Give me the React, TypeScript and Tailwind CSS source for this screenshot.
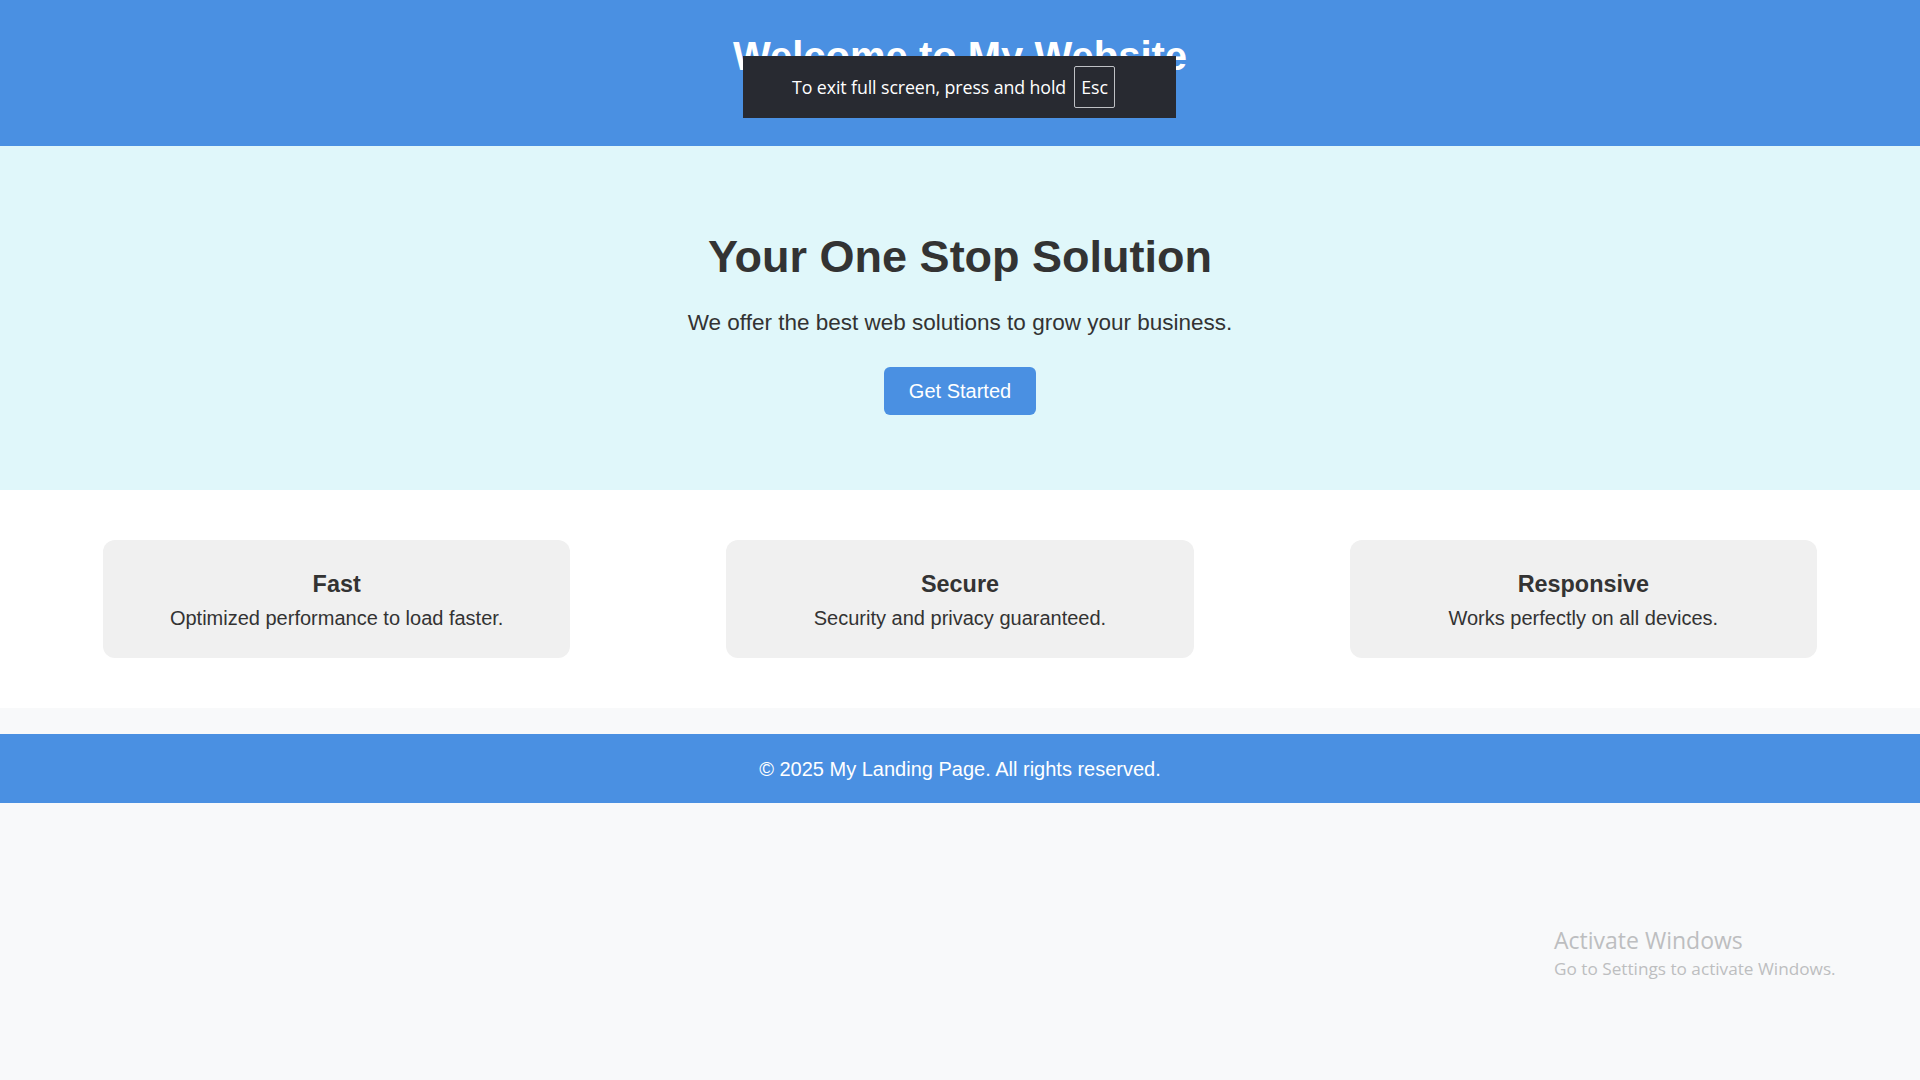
import React from 'react';

// --- Data ---
const features = [
  { title: 'Fast', text: 'Optimized performance to load faster.' },
  { title: 'Secure', text: 'Security and privacy guaranteed.' },
  { title: 'Responsive', text: 'Works perfectly on all devices.' },
];

// --- Feature card ---
const FeatureCard = ({ title, text }: { title: string; text: string }) => (
  <div className="w-1/4 bg-[#f0f0f0] rounded-[12px] pt-[31px] pb-[28px] text-center">
    <h3 className="text-[23.4px] leading-[26px] font-bold mb-[10px]">{title}</h3>
    <p className="text-[20px] leading-[23px]">{text}</p>
  </div>
);

export default function App() {
  return (
    <div className="relative min-h-screen bg-[#f8f9fa] text-[#333] font-['Liberation_Sans',Arial,sans-serif]">
      {/* --- HEADER --- */}
      <header className="h-[146px] bg-[#4a90e2] text-white text-center pt-[33px]">
        <h1 className="text-[40px] leading-[46px] font-bold">Welcome to My Website</h1>
      </header>

      {/* --- HERO --- */}
      <section className="bg-[#e0f7fa] text-center pt-[85px] pb-[75px] flex flex-col items-center">
        <h2 className="text-[45px] leading-[51px] font-bold">Your One Stop Solution</h2>
        <p className="text-[22.5px] leading-[26px] mt-[28px]">We offer the best web solutions to grow your business.</p>
        <button className="mt-[31px] bg-[#4a90e2] text-white text-[20px] leading-[23px] px-[25px] py-[12.5px] rounded-[6px]">
          Get Started
        </button>
      </section>

      {/* --- FEATURES --- */}
      <section className="bg-white flex justify-around px-[25px] py-[50px]">
        {features.map(f => (
          <FeatureCard key={f.title} title={f.title} text={f.text} />
        ))}
      </section>

      {/* --- FOOTER --- */}
      <footer className="mt-[26px] bg-[#4a90e2] text-white text-center text-[20px] leading-[23px] pt-[24px] pb-[22px]">
        © 2025 My Landing Page. All rights reserved.
      </footer>

      {/* --- fullscreen notice overlay --- */}
      <div className="absolute left-[743px] top-[56px] w-[433px] h-[62px] bg-[#282a31] flex items-center gap-[8px] pl-[49px] font-['Open_Sans',sans-serif]">
        <span className="text-white text-[17.8px] tracking-[-0.1px]">To exit full screen, press and hold</span>
        <span className="text-white text-[17.8px] border border-[#bfc1c5] rounded-[2px] w-[41px] h-[42px] flex items-center justify-center">
          Esc
        </span>
      </div>

      {/* --- activation watermark --- */}
      <div className="absolute left-[1554px] top-[926px] text-[#bdbec0] font-['Open_Sans',sans-serif] leading-tight">
        <div className="text-[23px]">Activate Windows</div>
        <div className="text-[17.2px] mt-[3px]">Go to Settings to activate Windows.</div>
      </div>
    </div>
  );
}
